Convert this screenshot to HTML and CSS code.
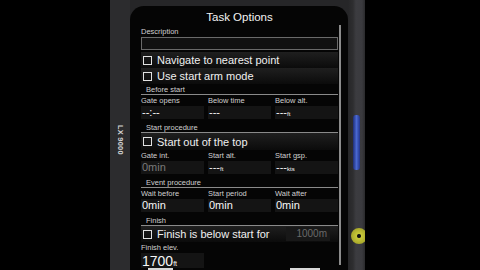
FILE: index.html
```html
<!DOCTYPE html>
<html>

<head>
    <title>Task Options</title>
    <link rel="stylesheet" href="styles.css">
</head>

<body>
    <div class="device">
        <div class="frame-left">
            <span class="brand">LX 9000</span>
        </div>

        <div class="frame-mid">
            <div class="screen">
                <div class="content">
                    <div class="title">Task Options</div>

                    <div class="label first">Description</div>
                    <div class="text-box"></div>

                    <div class="check-row"><span class="box"></span>Navigate to nearest point</div>
                    <div class="check-row"><span class="box"></span>Use start arm mode</div>

                    <div class="section">Before start</div>
                    <div class="fields">
                        <div class="label">Gate opens</div>
                        <div class="label">Below time</div>
                        <div class="label">Below alt.</div>
                        <div class="value">--:--</div>
                        <div class="value">---</div>
                        <div class="value">---<small>ft</small></div>
                    </div>

                    <div class="section">Start procedure</div>
                    <div class="check-row tall"><span class="box"></span>Start out of the top</div>
                    <div class="fields">
                        <div class="label">Gate int.</div>
                        <div class="label">Start alt.</div>
                        <div class="label">Start gsp.</div>
                        <div class="value dim">0min</div>
                        <div class="value">---<small>ft</small></div>
                        <div class="value">---<small>kts</small></div>
                    </div>

                    <div class="section">Event procedure</div>
                    <div class="fields">
                        <div class="label">Wait before</div>
                        <div class="label">Start period</div>
                        <div class="label">Wait after</div>
                        <div class="value">0min</div>
                        <div class="value">0min</div>
                        <div class="value">0min</div>
                    </div>

                    <div class="section">Finish</div>
                    <div class="check-row"><span class="box"></span>Finish is below start for
                        <span class="side-value">1000m</span>
                    </div>
                    <div class="fields">
                        <div class="label">Finish elev.</div>
                        <div class="label"></div>
                        <div class="label"></div>
                        <div class="value big">1700<small>ft</small></div>
                    </div>

                    <div class="footer">
                        <span class="tab"></span>
                        <span class="tab right"></span>
                    </div>
                </div>
                <div class="scrollbar"></div>
            </div>
        </div>

        <div class="frame-right">
            <div class="blue-key"></div>
            <div class="knob"></div>
        </div>
    </div>
</body>

</html>
```

FILE: styles.css
```css
body {
    margin: 0;
    background-color: #000000;
    font-family: "Liberation Sans", Arial, sans-serif;
}

.device {
    margin-left: 110px;
    width: 255px;
    height: 270px;
    display: flex;
    overflow: hidden;
}

/* left side of the case with the model name */
.frame-left {
    width: 20px;
    background-color: #2c2c2e;
    display: flex;
    justify-content: center;
    padding-top: 125px;
    box-sizing: border-box;
}

.brand {
    writing-mode: vertical-rl;
    font-size: 7.5px;
    font-weight: bold;
    color: #d4d4d4;
    letter-spacing: 0.2px;
}

.frame-mid {
    flex: 1;
    background-color: #262628;
}

.screen {
    margin-top: 6px;
    height: 264px;
    background-color: #050505;
    border-radius: 14px 14px 0 0;
    padding-left: 11px;
    display: flex;
    overflow: hidden;
}

.content {
    width: 197px;
}

.scrollbar {
    margin-left: 1px;
    margin-top: 19px;
    width: 2px;
    height: 240px;
    background-color: #8c8c8c;
}

.title {
    padding-top: 4px;
    height: 15px;
    line-height: 14px;
    text-align: center;
    font-size: 11.5px;
    color: #f4f4f4;
}

.label {
    font-size: 7.5px;
    line-height: 10px;
    color: #d0d0d0;
    padding-top: 1px;
    white-space: nowrap;
}

.label.first {
    padding-top: 2px;
}

.text-box {
    height: 11px;
    border: 1px solid #6a6a6a;
    background-color: #111111;
    margin-bottom: 2px;
}

.check-row {
    height: 16px;
    display: flex;
    align-items: center;
    font-size: 11px;
    color: #f0f0f0;
    background: linear-gradient(#1f1f1f, #0b0b0b);
}

.check-row.tall {
    height: 17px;
}

.box {
    width: 7px;
    height: 7px;
    border: 1px solid #e2e2e2;
    margin: 0 5px 0 2px;
}

.side-value {
    margin-left: auto;
    margin-right: 8px;
    width: 44px;
    height: 14px;
    line-height: 14px;
    background-color: #181818;
    color: #6a6a6a;
    font-size: 10px;
    text-align: right;
    padding-right: 3px;
    box-sizing: border-box;
}

.section {
    padding: 3px 0 0 5px;
    line-height: 9px;
    font-size: 7.5px;
    color: #d0d0d0;
    border-bottom: 1px solid #8a8a8a;
}

.check-row + .section {
    padding-top: 1px;
}

.fields {
    display: grid;
    grid-template-columns: 63px 63px 63px;
    column-gap: 4px;
}

.value {
    height: 13px;
    line-height: 13px;
    background-color: #141414;
    color: #f6f6f6;
    font-size: 11px;
    padding-left: 1px;
}

.value small {
    font-size: 6px;
}

.value.dim {
    color: #7a7a7a;
}

.value.big {
    height: 15px;
    line-height: 16px;
    font-size: 14px;
}

.value.big small {
    font-size: 7px;
}

.fields + .section {
    padding-top: 4px;
}

.footer {
    display: flex;
    height: 2px;
}

.tab {
    margin-left: 7px;
    width: 25px;
    background-color: #d8d8d8;
}

.tab.right {
    margin-left: 117px;
    width: 30px;
}

/* right side of the case with the buttons */
.frame-right {
    width: 17px;
    background: linear-gradient(to right, #262628 0, #2e2e30 5px, #3c3c40 8px, #3a3a3e 14px, #2a2a2c 17px);
    overflow: hidden;
}

.blue-key {
    margin: 115px 0 0 5px;
    width: 7px;
    height: 55px;
    border-radius: 3px;
    background: linear-gradient(to right, #1e2e78, #4a68d0, #22358a);
}

.knob {
    margin: 58px 0 0 3px;
    width: 16px;
    height: 16px;
    border-radius: 50%;
    background: radial-gradient(circle, #111111 0, #111111 1.5px, #c8c83a 2.5px, #a8a82a 8px);
}
```
